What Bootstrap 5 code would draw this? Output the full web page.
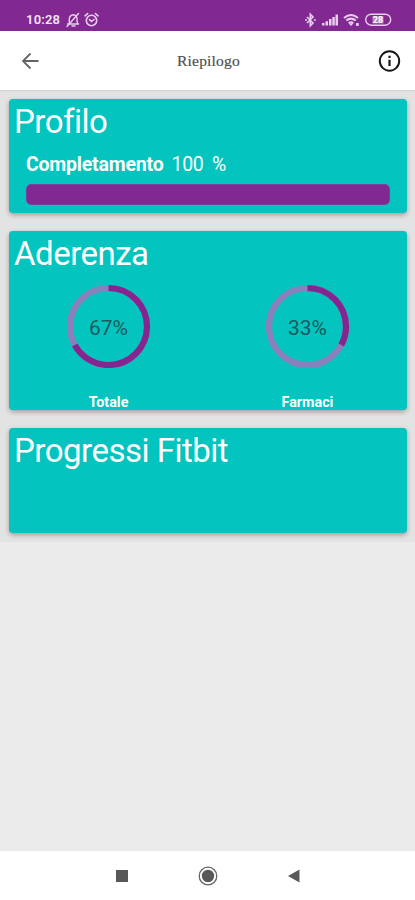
<!DOCTYPE html>
<html lang="it">
<head>
<meta charset="utf-8">
<meta name="viewport" content="width=device-width, initial-scale=1">
<title>Riepilogo</title>
<link href="https://cdn.jsdelivr.net/npm/bootstrap@5.3.0/dist/css/bootstrap.min.css" rel="stylesheet">
<style>
:root{--violet:#812990;--teal:#03c4be}
body{font-family:Roboto,sans-serif;background:#ebebeb;overflow:hidden}
svg{display:block;flex:none}
.status-bar{height:31px;background:var(--violet);color:#f3e3f6;padding:8px 23px 0 26px}
.clock{font-size:13px;font-weight:600;line-height:23px;letter-spacing:.2px;width:34px;margin-right:6px}
.signals{gap:4px}
.signals svg:first-child{margin-right:2px}
.app-bar{height:59px;padding:1px 14px 0 18px;box-shadow:0 1px 1px #d4d4d4;z-index:1}
.app-title{font:15.5px/24px "Liberation Serif",serif;letter-spacing:.2px;color:#505050;-webkit-text-stroke:.2px #505050;padding-right:3px}
.summary{background:#e3e3e3;padding:9px 8px 9px 9px;gap:18px}
.tile{background:var(--teal);color:#fff;border:0;border-radius:4px;box-shadow:0 2px 5px rgba(0,0,0,.3)}
.tile-title{font-size:33px;line-height:38px;font-weight:400;letter-spacing:-.5px;padding:4px 0 0 5px;margin:0}
.tile-profile{height:114px}.tile-adherence{height:179px}.tile-fitbit{height:105px}
.completion{font-size:19.5px;letter-spacing:-.2px;line-height:24px;padding-left:17px;margin-top:12px}
.completion b{font-weight:700}
.completion .amount{margin-left:8px;word-spacing:4px;letter-spacing:-.3px}
.meter{height:21px;margin:7px 17px 0;border-radius:5px;background:#8a7dbb}
.meter .progress-bar{background:var(--violet);border-radius:5px;border:1px solid #7240a0}
.gauges{margin-top:11px}
.gauge{width:84px;height:84px}
.gauge-value{color:#1c5a5d;font-size:21px;padding-top:5px}
.gauge-name{font-size:14.3px;line-height:18px;font-weight:700;margin-top:25px}
.nav-keys{height:49px}
.nav-keys svg{margin:0 33px}
</style>
</head>
<body>
<div class="vh-100 d-flex flex-column">
  <div class="status-bar d-flex align-items-center flex-shrink-0">
    <span class="clock">10:28</span>
    <svg width="14" height="16" viewBox="0 0 14 16" fill="none" stroke="#e9cdee" stroke-width="1.4" stroke-linecap="round" stroke-linejoin="round"><path d="M1.500 12h11M3.300 11.500V6.500Q4 3 7.300 2.700 10.700 3 11 6.500V10l1.200 2M6 14h3M1 14.500 12.500 1.500"/></svg>
    <svg class="ms-1" width="15" height="16" viewBox="0 0 15 16" fill="none" stroke="#e9cdee" stroke-width="1.6" stroke-linecap="round"><circle cx="7.500" cy="8.500" r="5.200"/><path d="M1 3.800 3.600 1.600M14 3.800 11.400 1.600M5.500 7.700 7.500 9.500 10 7.500"/></svg>
    <div class="signals ms-auto d-flex align-items-center">
      <svg width="11" height="16" viewBox="0 0 11 16" fill="none" stroke="#e9cdee" stroke-width="1.600"><path d="M2 5 8 11 5.300 13.800V2.200L8 5 2 11M0 8h2M8.800 8h2"/></svg>
      <svg width="17" height="14" viewBox="0 0 17 14" fill="#e9cdee"><path d="M0 10h2.500v2.500H0zM3.500 8.300H6v4.200H3.500zM7 6h2.500v6.500H7zM10.300 4h2.500v8.500h-2.500zM13.500 1.500H16v11h-2.500z"/></svg>
      <svg width="18" height="14" viewBox="0 0 18 14" fill="none" stroke="#e9cdee" stroke-width="2"><path d="M1 5Q8-1 15 5M3.300 7.600Q8 3.600 12.700 7.600M5.700 10Q8 8.300 10.300 10"/><path d="m8 13-2.500-2.800h5z" fill="#e9cdee" stroke="none"/><path d="M13 11.500h2.800" stroke-width="2.800"/></svg>
      <svg width="27" height="14" viewBox="0 0 27 14"><rect x=".7" y="1.200" width="25" height="11" rx="5.500" fill="none" stroke="#e9cdee" stroke-width="1.400"/><path d="M7.500 3h11v7.500h-11z" fill="#b77fc0"/><text x="13" y="10" text-anchor="middle" font-size="9" font-weight="700" fill="#fff">28</text></svg>
    </div>
  </div>

  <header class="app-bar bg-white d-flex align-items-center justify-content-between flex-shrink-0 position-relative">
    <svg width="24" height="24" viewBox="0 0 24 24" fill="none" stroke="#646464" stroke-width="1.8"><path d="M20.500 12H5M12.500 4.500 5 12l7.500 7.500"/></svg>
    <h1 class="app-title m-0">Riepilogo</h1>
    <svg width="23" height="24" viewBox="0 0 23 24" fill="none" stroke="#171717"><circle cx="11.500" cy="12" r="9.700" stroke-width="2"/><path d="M11.500 10.800v6.200M11.500 6.700V9" stroke-width="2.200"/></svg>
  </header>

  <main class="flex-grow-1">
    <div class="summary d-flex flex-column">
      <section class="card tile tile-profile">
        <h2 class="tile-title">Profilo</h2>
        <div class="completion"><b>Completamento</b><span class="amount">100 %</span></div>
        <div class="progress meter"><div class="progress-bar w-100" role="progressbar" aria-valuenow="100" aria-valuemin="0" aria-valuemax="100"></div></div>
      </section>

      <section class="card tile tile-adherence">
        <h2 class="tile-title">Aderenza</h2>
        <div class="row g-0 gauges">
          <div class="col-6 d-flex flex-column align-items-center">
            <div class="gauge position-relative">
              <svg width="84" height="84" viewBox="0 0 84 84" fill="none" stroke-width="6.200"><circle cx="41.500" cy="42.500" r="38.500" stroke="#8a80bb"/><circle cx="41.500" cy="42.500" r="38.500" stroke="#842590" pathLength="100" stroke-dasharray="67 33" transform="rotate(-90 41.500 42.500)"/></svg>
              <span class="gauge-value position-absolute top-0 start-0 w-100 h-100 d-flex align-items-center justify-content-center">67%</span>
            </div>
            <div class="gauge-name">Totale</div>
          </div>
          <div class="col-6 d-flex flex-column align-items-center">
            <div class="gauge position-relative">
              <svg width="84" height="84" viewBox="0 0 84 84" fill="none" stroke-width="6.200"><circle cx="41.500" cy="42.500" r="38.500" stroke="#8a80bb"/><circle cx="41.500" cy="42.500" r="38.500" stroke="#842590" pathLength="100" stroke-dasharray="33 67" transform="rotate(-90 41.500 42.500)"/></svg>
              <span class="gauge-value position-absolute top-0 start-0 w-100 h-100 d-flex align-items-center justify-content-center">33%</span>
            </div>
            <div class="gauge-name">Farmaci</div>
          </div>
        </div>
      </section>

      <section class="card tile tile-fitbit">
        <h2 class="tile-title">Progressi Fitbit</h2>
      </section>
    </div>
  </main>

  <nav class="nav-keys bg-white d-flex align-items-center justify-content-center flex-shrink-0">
    <svg width="20" height="20" viewBox="0 0 20 20"><path d="M4 4h12v12H4z" fill="#585858"/></svg>
    <svg width="20" height="20" viewBox="0 0 20 20"><circle cx="10" cy="10" r="8.800" fill="none" stroke="#666" stroke-width="1.300"/><circle cx="10" cy="10" r="6.200" fill="#585858"/></svg>
    <svg width="20" height="20" viewBox="0 0 20 20"><path d="M4 10 15.500 3.500v13z" fill="#585858"/></svg>
  </nav>
</div>
<script src="https://cdn.jsdelivr.net/npm/bootstrap@5.3.0/dist/js/bootstrap.bundle.min.js"></script>
</body>
</html>
